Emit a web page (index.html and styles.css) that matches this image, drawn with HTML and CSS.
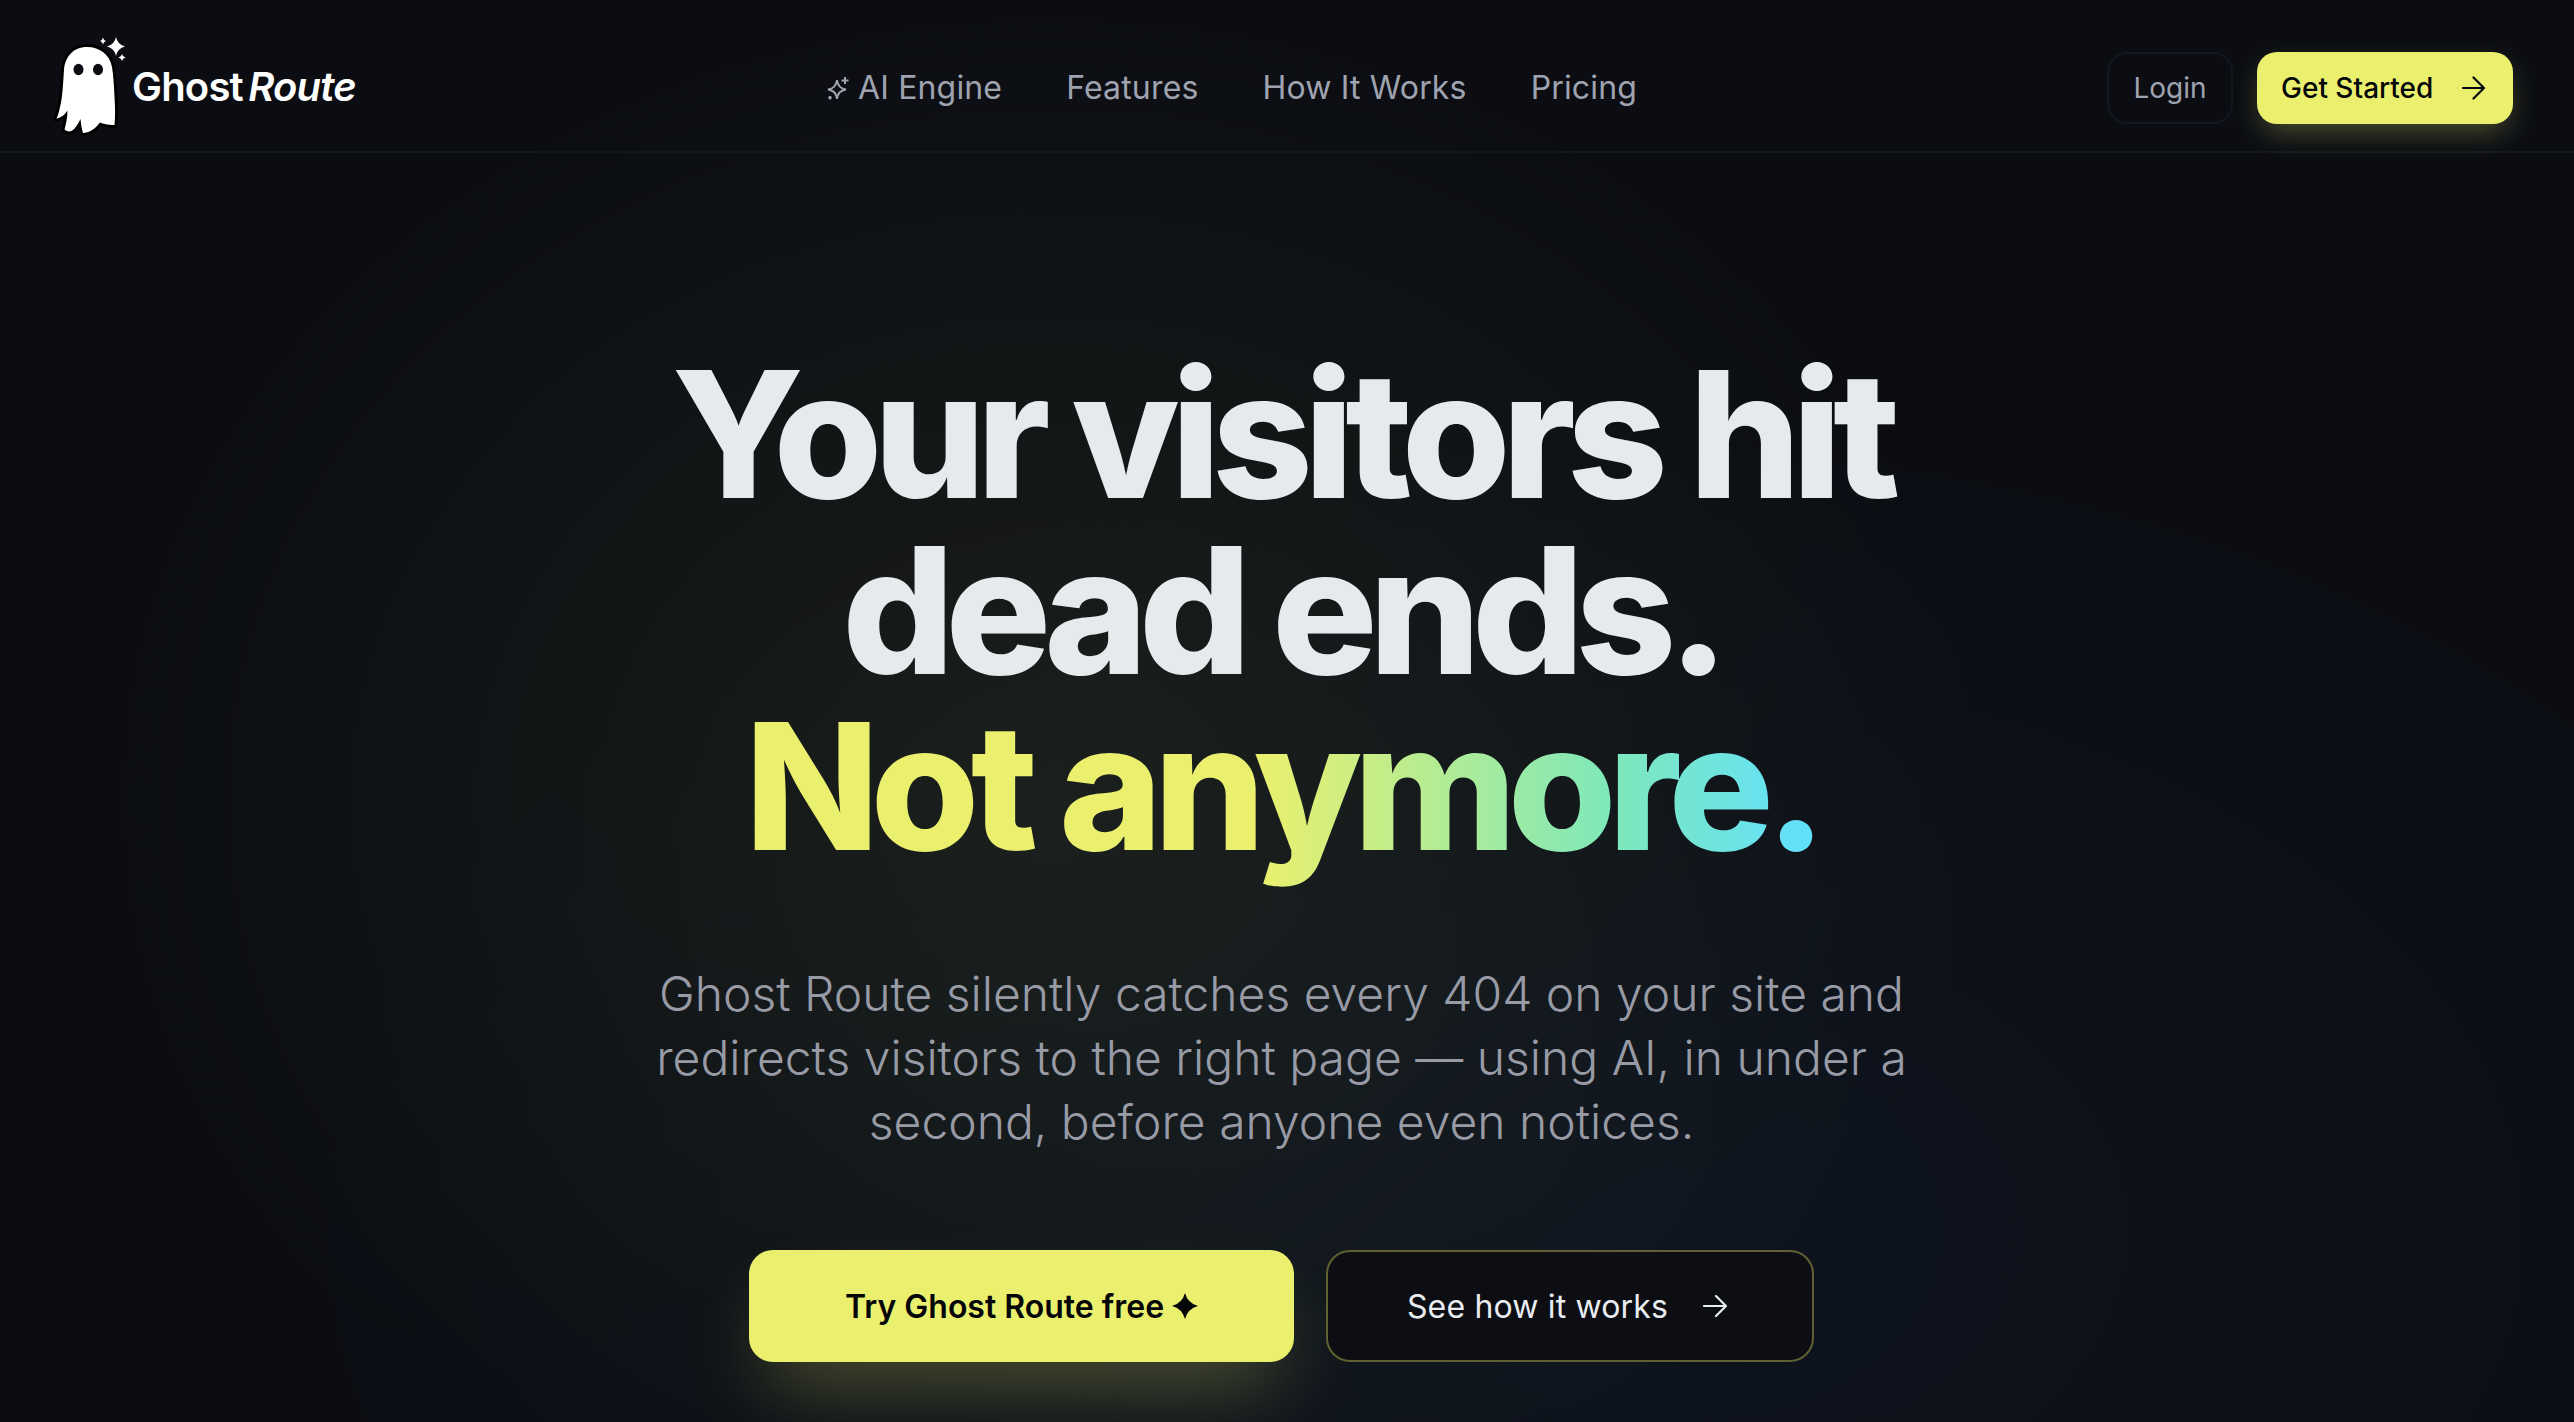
FILE: index.html
```html
<!DOCTYPE html>
<html lang="en">
<head>
<meta charset="utf-8">
<title>Ghost Route</title>
<link rel="stylesheet" href="styles.css">
</head>
<body>
<div class="page">
  <header class="nav">
    <a class="brand">
      <svg class="ghost" viewBox="45 30 90 115" width="90" height="115">
        <path class="ghost-body" d="M87 47C73 47 65 57 64 70C63 84 62.500 98 60 107C59 112 58 115.500 56.500 118.500C61 118 65 114.500 67.500 110.500C67.500 117 66 124 64.500 129.500C68 132.500 72 132 75 128C77.500 125 79 122 80.500 119C81 124 81.500 129 83 133C89 133 95 129 100 122.500C104 124 109 125.500 114.500 125C115.500 115 115 105 114.500 97C114 87 113.500 76 112 67C110 55 100 47 87 47Z"/>
        <ellipse class="ghost-eye" cx="78.500" cy="69.500" rx="5" ry="5.800"/>
        <ellipse class="ghost-eye" cx="98" cy="69.500" rx="5" ry="5.800"/>
        <path class="spark" d="M116 37Q117.500 44.500 125 46.500Q117.500 48.500 116 56Q114.500 48.500 107 46.500Q114.500 44.500 116 37Z"/>
        <path class="spark" d="M122 54Q122.600 56.900 125.500 57.500Q122.600 58.100 122 61Q121.400 58.100 118.500 57.500Q121.400 56.900 122 54Z"/>
        <path class="spark" d="M103 37.500Q103.500 40.500 106 41Q103.500 41.500 103 44.500Q102.500 41.500 100 41Q102.500 40.500 103 37.500Z"/>
      </svg>
      <span class="wordmark">Ghost <em>Route</em></span>
    </a>
    <nav class="links">
      <a class="link"><svg class="sparkle" viewBox="0 0 24 24" width="24" height="24"><path d="M11 4Q12 12.500 20 13.500Q12 14.500 11 23Q10 14.500 2 13.500Q10 12.500 11 4Z"/><path d="M19 1V8M15.500 4.500H22.500M4 20V23.500M2.300 21.700H5.700"/></svg>AI Engine</a>
      <a class="link">Features</a>
      <a class="link">How It Works</a>
      <a class="link">Pricing</a>
    </nav>
    <div class="actions">
      <a class="btn-login">Login</a>
      <a class="btn-start">Get Started
        <svg class="arrow" viewBox="0 0 24 24" width="24" height="24"><path d="M2 12H23M12.500 1.500L23 12L12.500 22.500"/></svg>
      </a>
    </div>
  </header>
  <main class="hero">
    <h1 class="title">Your visitors hit<br>dead ends.<br><span class="accent">Not anymore.</span></h1>
    <p class="lead">Ghost Route silently catches every 404 on your site and<br>redirects visitors to the right page — using AI, in under a<br>second, before anyone even notices.</p>
    <div class="cta">
      <a class="cta-primary">Try Ghost Route free <svg class="star" viewBox="0 0 24 24" width="26" height="26"><path d="M12 0Q14.500 9.500 24 12Q14.500 14.500 12 24Q9.500 14.500 0 12Q9.500 9.500 12 0Z"/></svg></a>
      <a class="cta-secondary">See how it works
        <svg class="arrow" viewBox="0 0 24 24" width="24" height="24"><path d="M1 12H23M13 2L23 12L13 22"/></svg>
      </a>
    </div>
  </main>
</div>
</body>
</html>
```
FILE: styles.css
```css
* { box-sizing: border-box; }
html, body { margin: 0; height: 100%; }
body {
  background-color: #0b0d13;
  font-family: "Inter", "Liberation Sans", sans-serif;
  overflow: hidden;
}
.page {
  height: 1422px;
  background:
    radial-gradient(ellipse 950px 800px at 1050px 800px, rgba(215, 235, 100, 0.075), rgba(215, 235, 100, 0) 100%),
    radial-gradient(ellipse 1300px 800px at 1600px 1230px, rgba(40, 90, 150, 0.09), rgba(40, 90, 150, 0) 100%),
    #0b0d13;
}
.nav {
  height: 153px;
  border-bottom: 2px solid #14161d;
  display: grid;
  grid-template-columns: 695px 1fr auto;
  align-items: center;
  padding: 24px 61px 0 45px;
}
.brand { display: flex; align-items: center; }
.ghost { display: block; }
.ghost-body { fill: #fff; stroke: #000; stroke-width: 6; paint-order: stroke; stroke-linejoin: round; }
.ghost-eye { fill: #0b0d13; }
.spark { fill: #fff; }
.wordmark {
  margin-left: -3px;
  margin-top: -3px;
  font-size: 40px;
  font-weight: 600;
  letter-spacing: -0.02em;
  color: #fff;
  word-spacing: -0.1em;
}
.wordmark em { font-style: italic; font-weight: 600; }
.links { display: flex; align-items: center; gap: 64px; margin-left: 86px; }
.link {
  display: flex;
  align-items: center;
  gap: 8px;
  font-size: 32px;
  font-weight: 400;
  letter-spacing: 0.005em;
  color: #9fa3af;
}
.sparkle { fill: none; stroke: #9fa3af; stroke-width: 2; }
.actions { display: flex; align-items: center; gap: 24px; }
.btn-login {
  height: 72px;
  width: 126px;
  display: flex;
  align-items: center;
  justify-content: center;
  border: 2px solid #15171f;
  border-radius: 20px;
  font-size: 28px;
  color: #9fa3af;
}
.btn-start {
  height: 72px;
  width: 256px;
  display: flex;
  align-items: center;
  justify-content: space-between;
  padding: 0 28px 0 24px;
  border-radius: 20px;
  background: #eaf06e;
  color: #050608;
  font-size: 28px;
  font-weight: 450;
  box-shadow: 0 12px 30px -6px rgba(234, 240, 110, 0.32);
}
.arrow { fill: none; stroke: currentColor; stroke-width: 2.200; stroke-linecap: round; stroke-linejoin: round; }
.hero {
  display: flex;
  flex-direction: column;
  align-items: center;
  padding: 193px 11px 0 0;
}
.title {
  margin: 0;
  font-size: 176px;
  line-height: 176px;
  font-weight: 800;
  letter-spacing: -0.05em;
  text-align: center;
  color: #e7eaed;
}
.accent {
  background: linear-gradient(90deg, #eaf06e 0%, #eaf06e 48%, #80e8b8 80%, #60e0ff 100%);
  -webkit-background-clip: text;
  background-clip: text;
  color: transparent;
}
.lead {
  margin: 88px 0 0;
  font-size: 48px;
  line-height: 64px;
  font-weight: 300;
  text-align: center;
  color: #989ba5;
}
.cta { display: flex; gap: 32px; margin-top: 96px; }
.cta-primary {
  width: 545px;
  height: 112px;
  display: flex;
  align-items: center;
  justify-content: center;
  gap: 8px;
  border-radius: 24px;
  background: #eaf06e;
  color: #050608;
  font-size: 32px;
  font-weight: 600;
  box-shadow: 0 40px 80px -20px rgba(234, 240, 110, 0.3);
}
.star { fill: #050608; }
.cta-secondary {
  width: 488px;
  height: 112px;
  display: flex;
  align-items: center;
  justify-content: center;
  gap: 35px;
  padding-right: 6px;
  border: 2px solid #5f6130;
  border-radius: 24px;
  background: #0c0e14;
  color: #e9ecf0;
  font-size: 32px;
  font-weight: 400;
  letter-spacing: 0.005em;
}
```
